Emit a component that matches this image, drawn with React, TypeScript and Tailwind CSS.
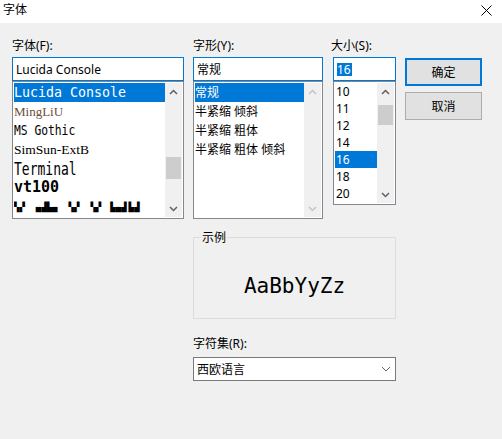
import React from "react";

const ui = "font-['Noto_Sans','Noto_Sans_CJK_SC',sans-serif]";

function Arrow({ up, color }: { up?: boolean; color: string }) {
  return (
    <svg width="9" height="6" viewBox="0 0 9 6">
      <polyline
        points={up ? "1,5 4.5,1.5 8,5" : "1,1 4.5,4.5 8,1"}
        fill="none"
        stroke={color}
        strokeWidth="1.5"
      />
    </svg>
  );
}

function ScrollBar({ thumb, disabled }: { thumb?: string; disabled?: boolean }) {
  const c = disabled ? "#c4c4c4" : "#606060";
  return (
    <div className="flex w-[17px] flex-col bg-[#f0f0f0]">
      <div className="flex h-[17px] items-center justify-center">
        <Arrow up color={c} />
      </div>
      <div className="flex-1">{thumb && <div className={`mx-px bg-[#cdcdcd] ${thumb}`} />}</div>
      <div className="flex h-[17px] items-center justify-center">
        <Arrow color={c} />
      </div>
    </div>
  );
}

function Label({ children, className = "" }: { children: React.ReactNode; className?: string }) {
  return <div className={`mb-[4px] h-[15px] leading-[15px] ${className}`}>{children}</div>;
}

function Edit({ children }: { children: React.ReactNode }) {
  return (
    <div className="flex h-[24px] items-center border border-[#0078d7] bg-white pl-[3px] leading-[15px]">
      {children}
    </div>
  );
}

const fonts = [
  { label: "Lucida Console", cls: "font-['DejaVu_Sans_Mono',monospace] text-[13.3px]", sel: true },
  { label: "MingLiU", cls: "font-['Liberation_Serif',serif] text-[13px] text-[#6b4e3d]" },
  { label: "MS Gothic", cls: "font-['DejaVu_Sans_Mono',monospace] text-[11.3px] scale-y-[1.3]" },
  { label: "SimSun-ExtB", cls: "font-['Liberation_Serif',serif] text-[13.5px]" },
  { label: "Terminal", cls: "font-['DejaVu_Sans_Mono',monospace] text-[13px] scale-y-[1.4]" },
  { label: "vt100", cls: "font-['DejaVu_Sans_Mono',monospace] text-[15px] font-bold" },
];

const styles = ["常规", "半紧缩 倾斜", "半紧缩 粗体", "半紧缩 粗体 倾斜"];
const sizes = ["10", "11", "12", "14", "16", "18", "20"];

export default function App() {
  return (
    <div className={`${ui} h-[439px] w-[502px] overflow-hidden bg-[#f0f0f0] text-[12px] text-black`}>
      <div className="flex h-[23px] items-start justify-between bg-white pl-[3px] pr-[10px]">
        <span className="mt-[2px] leading-[15px]">字体</span>
        <svg width="11" height="11" viewBox="0 0 11 11" className="mt-[5px]">
          <path d="M0.5 0.5L10.5 10.5M10.5 0.5L0.5 10.5" stroke="#000" strokeWidth="1" />
        </svg>
      </div>

      <div className="px-[12px] pt-[15px]">
        <div className="flex">
          {/* font name */}
          <div className="w-[172px]">
            <Label>字体(F):</Label>
            <Edit>Lucida Console</Edit>
            <div className="flex h-[138px] border border-[#828790] bg-white p-px">
              <div className="flex-1 overflow-hidden">
                {fonts.map((f) => (
                  <div
                    key={f.label}
                    className={`flex h-[19px] items-center whitespace-nowrap ${f.sel ? "bg-[#0078d7] text-white" : ""}`}
                  >
                    <span className={`inline-block leading-[15px] ${f.cls}`}>{f.label}</span>
                  </div>
                ))}
                <div className="flex h-[19px] items-end whitespace-nowrap pb-[3px] font-['DejaVu_Sans_Mono',monospace] text-[9px] leading-[11px]">
                  <span>▚▞</span>
                  <span className="ml-[11px]">▄▟▙▄</span>
                  <span className="ml-[11px]">▚▞</span>
                  <span className="ml-[11px]">▚▞</span>
                  <span className="ml-[9px]">▙▄▟</span>
                  <span className="ml-[2px]">▙▟</span>
                </div>
              </div>
              <ScrollBar thumb="mt-[57px] h-[22px]" />
            </div>
          </div>

          {/* style */}
          <div className="ml-[9px] w-[130px]">
            <Label>字形(Y):</Label>
            <Edit>常规</Edit>
            <div className="flex h-[138px] border border-[#828790] bg-white p-px">
              <div className="flex-1">
                {styles.map((s, i) => (
                  <div
                    key={s}
                    className={`flex h-[19px] items-center whitespace-nowrap leading-[15px] ${i === 0 ? "bg-[#0078d7] text-white" : ""}`}
                  >
                    {s}
                  </div>
                ))}
              </div>
              <ScrollBar disabled />
            </div>
          </div>

          {/* size */}
          <div className="ml-[10px] w-[63px]">
            <Label className="-ml-[2px]">大小(S):</Label>
            <Edit>
              <span className="inline-block h-[13px] bg-[#0078d7] pr-px leading-[13px] text-white">16</span>
            </Edit>
            <div className="flex h-[124px] border border-[#828790] bg-white p-px">
              <div className="flex-1">
                {sizes.map((s) => (
                  <div
                    key={s}
                    className={`flex h-[17px] items-center pl-px leading-[15px] ${s === "16" ? "bg-[#0078d7] text-white" : ""}`}
                  >
                    {s}
                  </div>
                ))}
              </div>
              <ScrollBar thumb="mt-[5px] h-[20px]" />
            </div>
          </div>

          {/* buttons */}
          <div className="ml-[9px] mt-[20px] flex w-[77px] flex-col gap-[6px]">
            <button className="flex h-[28px] items-center justify-center border-2 border-[#0078d7] bg-[#e1e1e1] leading-[15px]">
              确定
            </button>
            <button className="flex h-[28px] items-center justify-center border border-[#adadad] bg-[#e1e1e1] leading-[15px]">
              取消
            </button>
          </div>
        </div>

        <div className="ml-[181px] mt-[18px] w-[203px]">
          <div className="relative h-[82px] border border-[#dcdcdc] pt-[36px] text-center">
            <span className="absolute -top-[8px] left-[7px] bg-[#f0f0f0] px-px leading-[15px]">示例</span>
            <div className="font-['DejaVu_Sans_Mono',monospace] text-[21px] leading-[24px]">AaBbYyZz</div>
          </div>

          <div className="mt-[17px]">
            <Label className="mb-[6px]">字符集(R):</Label>
            <div className="flex h-[24px] items-center justify-between border border-[#7a7a7a] bg-white pl-[3px] pr-[4px] leading-[15px]">
              <span>西欧语言</span>
              <svg width="10" height="6" viewBox="0 0 10 6">
                <polyline points="1,1 5,5 9,1" fill="none" stroke="#606060" strokeWidth="1" />
              </svg>
            </div>
          </div>
        </div>
      </div>
    </div>
  );
}
